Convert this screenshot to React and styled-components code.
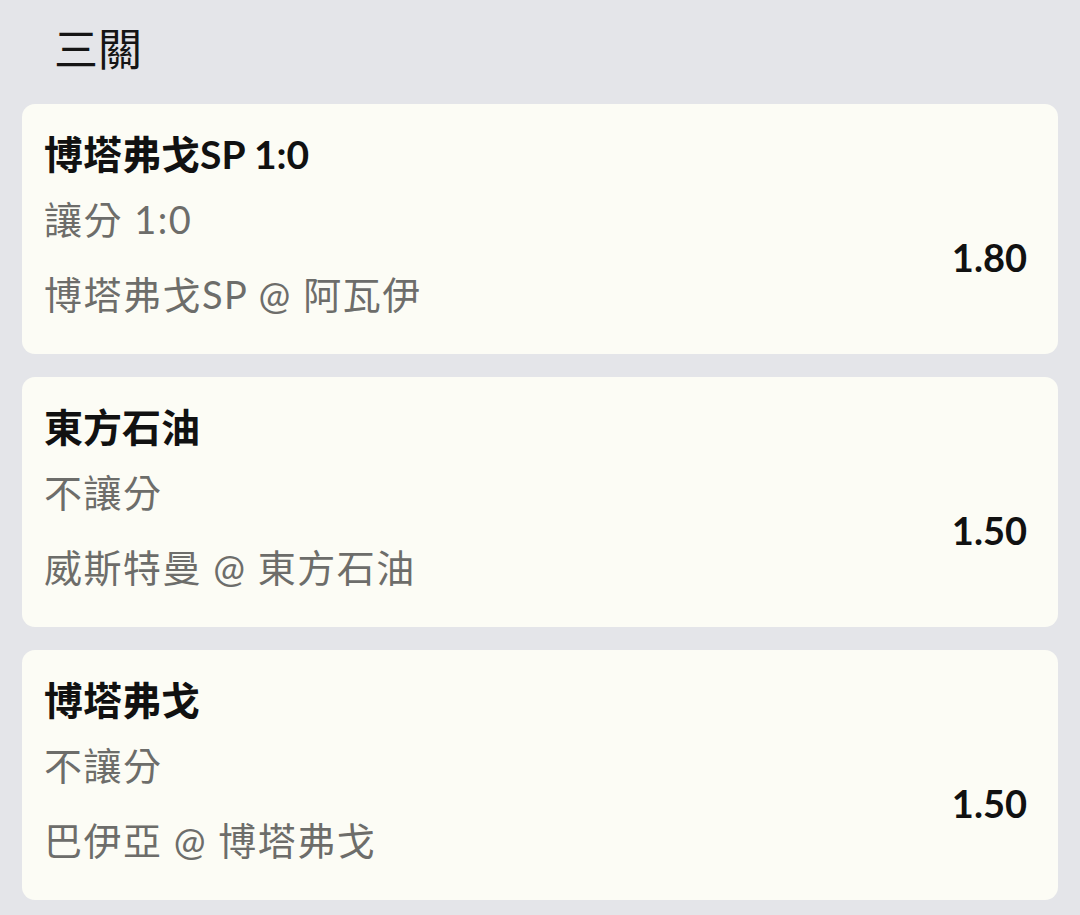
import React from "react";
import styled, { createGlobalStyle } from "styled-components";

const Global = createGlobalStyle`
  html, body {
    margin: 0;
    padding: 0;
    background: #e4e5e9;
  }
  body {
    font-family: Lato, "Noto Sans CJK TC", sans-serif;
    -webkit-font-smoothing: antialiased;
  }
`;

const Page = styled.div`
  width: 1080px;
  min-height: 915px;
  box-sizing: border-box;
  padding: 20px 22px 0 22px;
  background: #e4e5e9;
  display: flex;
  flex-direction: column;
`;

const Header = styled.h1`
  margin: 0 0 25px 32px;
  font-family: Lato, "Noto Sans CJK TC", sans-serif;
  font-weight: 400;
  font-size: 44px;
  line-height: 59px;
  color: #151515;
`;

const List = styled.div`
  display: flex;
  flex-direction: column;
  gap: 23px;
`;

const Card = styled.div`
  background: #fcfcf5;
  border-radius: 13px;
  height: 250px;
  box-sizing: border-box;
  padding: 24px 31px 34px 22px;
  display: flex;
  flex-direction: column;
`;

const Title = styled.div`
  font-weight: 700;
  font-size: 39px;
  line-height: 52px;
  color: #111111;
  margin-bottom: 13px;
`;

const Body = styled.div`
  display: flex;
  align-items: center;
  justify-content: space-between;
`;

const Details = styled.div`
  display: flex;
  flex-direction: column;
  gap: 23px;
`;

const Line = styled.div`
  font-weight: 400;
  font-size: 38px;
  line-height: 52px;
  color: #6d6d6a;
  letter-spacing: 1.5px;
`;

const Odds = styled.div`
  font-weight: 700;
  font-size: 38px;
  line-height: 52px;
  color: #111111;
`;

const bets = [
  { title: "博塔弗戈SP 1:0", type: "讓分 1:0", match: "博塔弗戈SP @ 阿瓦伊", odds: "1.80" },
  { title: "東方石油", type: "不讓分", match: "威斯特曼 @ 東方石油", odds: "1.50" },
  { title: "博塔弗戈", type: "不讓分", match: "巴伊亞 @ 博塔弗戈", odds: "1.50" },
];

export default function App() {
  return (
    <>
      <Global />
      <Page>
        <Header>三關</Header>
        <List>
          {bets.map((b, i) => (
            <Card key={i}>
              <Title>{b.title}</Title>
              <Body>
                <Details>
                  <Line>{b.type}</Line>
                  <Line>{b.match}</Line>
                </Details>
                <Odds>{b.odds}</Odds>
              </Body>
            </Card>
          ))}
        </List>
      </Page>
    </>
  );
}
